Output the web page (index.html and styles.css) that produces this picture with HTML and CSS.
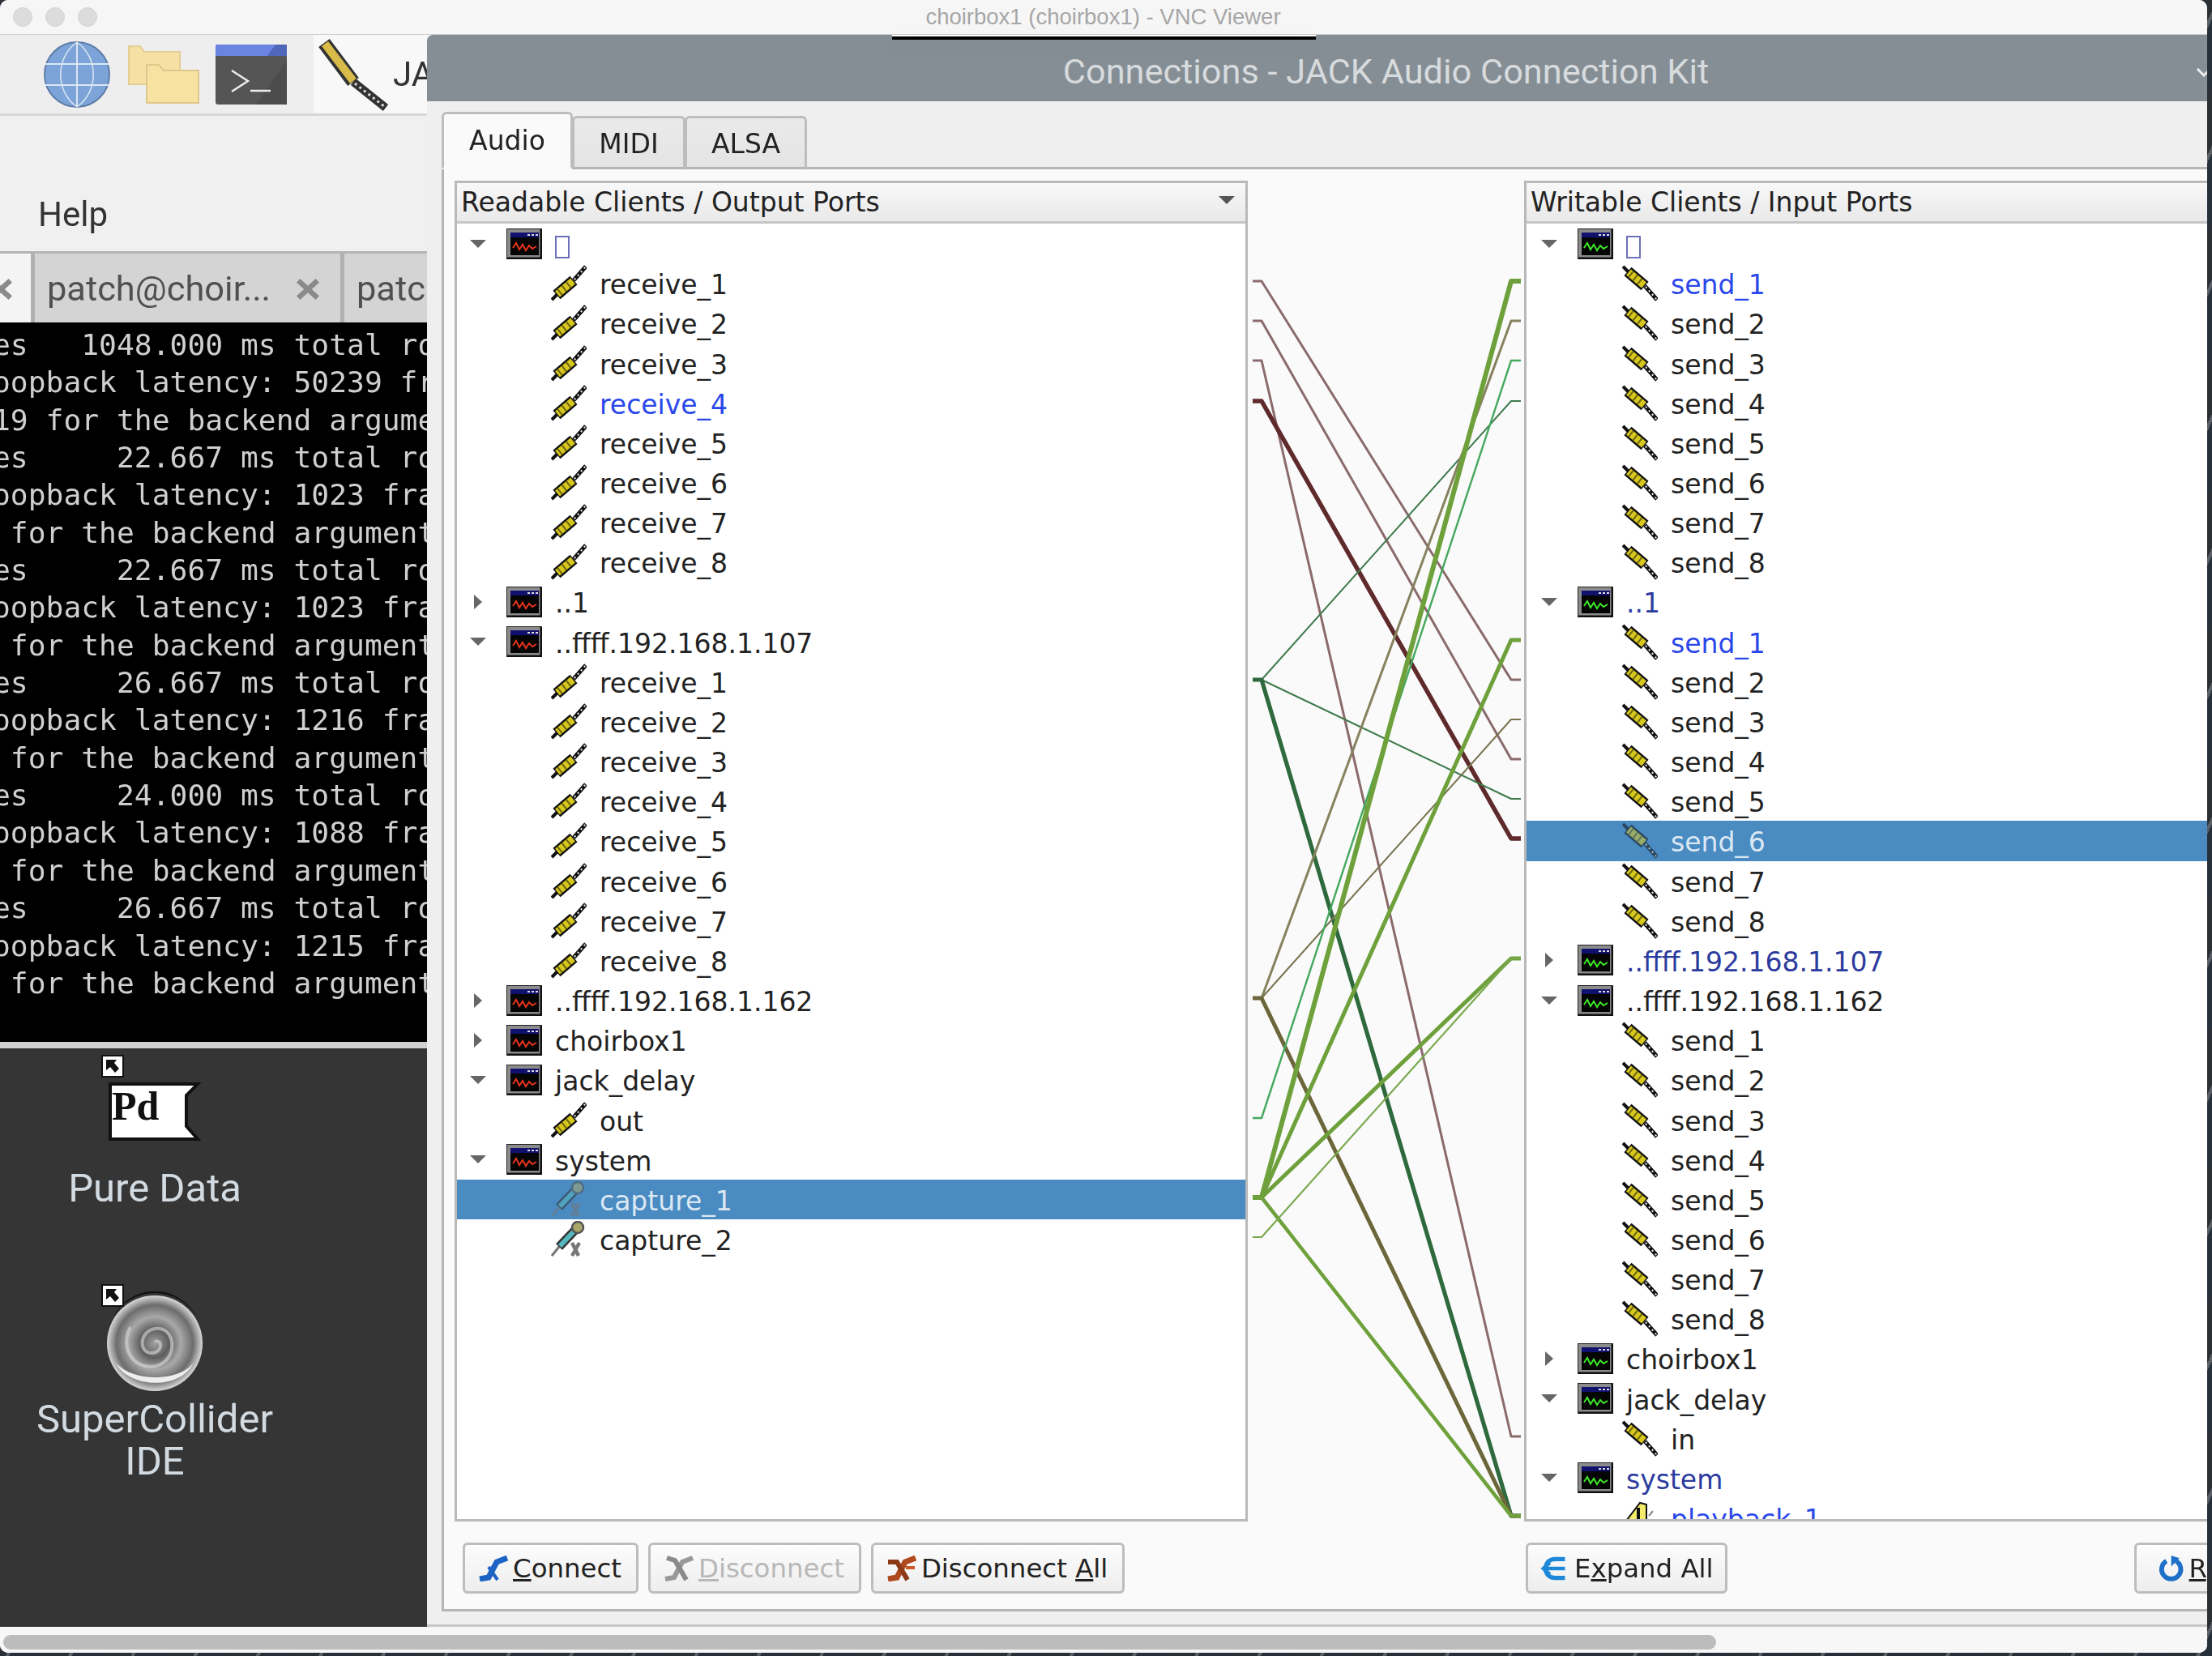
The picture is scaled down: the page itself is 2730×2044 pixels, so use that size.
FILE: index.html
```html
<!DOCTYPE html>
<html lang="en">
<head>
  <meta charset="UTF-8">
  <title>choirbox1 (choirbox1) - VNC Viewer</title>
  <link rel="stylesheet" href="styles.css">
</head>
<body>

  <!-- shared icons -->
  <svg class="defs" width="0" height="0">
    <defs>
      <g id="plug">
        <path d="M1 43L9 35" stroke="#111" stroke-width="4"/>
        <path d="M7 37L28 19" stroke="#111" stroke-width="14"/>
        <path d="M8 36L27 20" stroke="#d8c81e" stroke-width="9"/>
        <path d="M10 34L25 22" stroke="#6a6410" stroke-width="9" stroke-dasharray="2 5"/>
        <path d="M28 19L43 2" stroke="#111" stroke-width="5"/>
        <path d="M29 18L43 2" stroke="#eee" stroke-width="2" stroke-dasharray="2 4"/>
      </g>
      <g id="client-red">
        <rect x="0.5" y="0.5" width="43" height="37" fill="#8b8b8b" stroke="#222"/>
        <path d="M43 1V37H1" fill="none" stroke="#111" stroke-width="3"/>
        <rect x="5" y="5" width="35" height="28" fill="#050505"/>
        <rect x="5" y="5" width="35" height="6" fill="#10106e"/>
        <path d="M26 8h3M31 8h3M36 8h3" stroke="#ddd" stroke-width="2"/>
        <path d="M8 24L12 18L16 26L20 20L24 27L28 21L32 25L37 22" fill="none" stroke="#e8341c" stroke-width="2"/>
      </g>
      <g id="client-green">
        <rect x="0.5" y="0.5" width="43" height="37" fill="#8b8b8b" stroke="#222"/>
        <path d="M43 1V37H1" fill="none" stroke="#111" stroke-width="3"/>
        <rect x="5" y="5" width="35" height="28" fill="#050505"/>
        <rect x="5" y="5" width="35" height="6" fill="#10106e"/>
        <path d="M26 8h3M31 8h3M36 8h3" stroke="#ddd" stroke-width="2"/>
        <path d="M8 24L12 18L16 26L20 20L24 27L28 21L32 25L37 22" fill="none" stroke="#3ee82a" stroke-width="2"/>
      </g>
      <g id="mic">
        <path d="M1 43L14 27" stroke="#777" stroke-width="3"/>
        <path d="M10 32L30 11" stroke="#333" stroke-width="11"/>
        <path d="M11 31L29 12" stroke="#55b8bc" stroke-width="6"/>
        <circle cx="33" cy="8" r="7" fill="#a8a66a" stroke="#555" stroke-width="2.5"/>
        <path d="M26 27L34 43M35 27L26 43" stroke="#777" stroke-width="4.5"/>
      </g>
      <g id="shortcut">
        <rect width="26" height="26" fill="#fff" stroke="#111" stroke-width="2"/>
        <path d="M5 5H18L15 9L21 16L16 21L10 14L5 18Z" fill="#111"/>
      </g>
    </defs>
  </svg>

  <div class="mac-window">
    <div class="mac-titlebar">
      <div class="lights"><i></i><i></i><i></i></div>
      <div class="mac-title">choirbox1 (choirbox1) - VNC Viewer</div>
    </div>
    <div class="vnc-handle"></div>

    <div class="vnc">
      <!-- LEFT: panel, terminal, desktop -->
      <div class="left-col">
        <div class="panel">
          <svg class="p-globe" viewBox="0 0 82 82">
            <ellipse cx="41" cy="41" rx="40" ry="40" fill="#7da4d8" stroke="#5d7ca8" stroke-width="2"/>
            <path d="M41 1V81M2 28H80M2 54H80" stroke="#dbe6f4" stroke-width="2" fill="none"/>
            <path d="M41 1C14 20 14 62 41 81M41 1C68 20 68 62 41 81" stroke="#dbe6f4" stroke-width="1.5" fill="none"/>
          </svg>
          <svg class="p-folder" viewBox="0 0 88 72">
            <path d="M1 1H15L20 8H64V48H1Z" fill="#f6e0a4" stroke="#e3cf96" stroke-width="2"/>
            <path d="M23 24H38L44 31H87V71H23Z" fill="#f8e2a2" stroke="#dfc88e" stroke-width="2"/>
          </svg>
          <svg class="p-term" viewBox="0 0 88 74">
            <rect width="88" height="74" rx="3" fill="#555"/>
            <path d="M50 74L88 20V74Z" fill="#4c4c4c"/>
            <rect width="88" height="14" rx="2" fill="#6a84e2"/>
            <path d="M64 14L74 0H88V14Z" fill="#5066b8"/>
            <path d="M20 32L40 45L20 58" fill="none" stroke="#eee" stroke-width="2.5"/>
            <path d="M43 57H68" stroke="#eee" stroke-width="2.5"/>
          </svg>
          <div class="panel-task">
            <svg class="p-jack" viewBox="0 0 90 90">
              <path d="M8 6L44 54" stroke="#333" stroke-width="17"/>
              <path d="M9 7L44 53" stroke="#d9bb4a" stroke-width="10"/>
              <path d="M44 54L84 86" stroke="#333" stroke-width="10"/>
              <path d="M46 56L83 85" stroke="#ddd" stroke-width="3" stroke-dasharray="3 4"/>
            </svg>
            <span class="task-label">JACK</span>
          </div>
        </div>
        <div class="menu"><span>Help</span></div>
        <div class="tabbar">
          <div class="term-tab current"><svg class="x" viewBox="0 0 28 26"><path d="M3 3L25 23M25 3L3 23"/></svg></div>
          <div class="term-tab"><span>patch@choir...</span><svg class="x" viewBox="0 0 28 26"><path d="M3 3L25 23M25 3L3 23"/></svg></div>
          <div class="term-tab"><span>patch@choir...</span></div>
        </div>
        <pre class="terminal">es   1048.000 ms total ro
oopback latency: 50239 fr
19 for the backend argume
es     22.667 ms total ro
oopback latency: 1023 fra
 for the backend argument
es     22.667 ms total ro
oopback latency: 1023 fra
 for the backend argument
es     26.667 ms total ro
oopback latency: 1216 fra
 for the backend argument
es     24.000 ms total ro
oopback latency: 1088 fra
 for the backend argument
es     26.667 ms total ro
oopback latency: 1215 fra
 for the backend argument</pre>
        <div class="desktop">
          <div class="launcher pd">
            <div class="launcher-icon">
              <svg class="lnk" viewBox="-1 -1 28 28"><use href="#shortcut"/></svg>
              <svg class="pd-flag" viewBox="0 0 114 72">
                <path d="M2 2H110L96 16V54L110 70H2Z" fill="#fff" stroke="#111" stroke-width="4"/>
                <text x="4" y="46" class="pd-text">Pd</text>
              </svg>
            </div>
            <div class="launcher-label">Pure Data</div>
          </div>
          <div class="launcher sc">
            <div class="launcher-icon">
              <svg class="swirl" viewBox="0 0 124 124">
                <defs>
                  <radialGradient id="sw" cx="50%" cy="50%" r="50%">
                    <stop offset="0" stop-color="#a0a0a0"/>
                    <stop offset=".3" stop-color="#5e5e5e"/>
                    <stop offset=".55" stop-color="#a8a8a8"/>
                    <stop offset=".8" stop-color="#6c6c6c"/>
                    <stop offset="1" stop-color="#d8d8d8"/>
                  </radialGradient>
                </defs>
                <circle cx="62" cy="64" r="59" fill="url(#sw)"/>
                <path d="M10 32A60 60 0 0 1 114 32A58 58 0 0 0 10 32Z" fill="#111"/>
                <path d="M62 62C72 58 72 76 58 76C42 76 42 50 62 46C88 42 92 84 64 92C36 98 18 70 32 44" fill="none" stroke="#d8d8d8" stroke-width="4" opacity=".6"/>
                <path d="M14 88C28 118 92 124 110 88C92 112 34 112 14 88Z" fill="#eee"/>
              </svg>
              <svg class="lnk" viewBox="-1 -1 28 28"><use href="#shortcut"/></svg>
            </div>
            <div class="launcher-label">SuperCollider<br>IDE</div>
          </div>
        </div>
      </div>

      <!-- RIGHT: connections dialog -->
      <div class="dialog">
        <div class="dialog-title">
          <span>Connections - JACK Audio Connection Kit</span>
          <svg class="chev" viewBox="0 0 20 12"><path d="M2 2L10 10L18 2"/></svg>
        </div>
        <div class="tabs">
          <div class="tab active">Audio</div>
          <div class="tab">MIDI</div>
          <div class="tab">ALSA</div>
        </div>
        <div class="pane">
          <div class="trees">
            <div class="tree left">
              <div class="tree-head">Readable Clients / Output Ports<i class="sort"></i></div>
              <div class="tree-body">
                <div class="row client"><i class="arrow open"></i><svg class="c-icon"><use href="#client-red"/></svg><span class="tofu"></span></div>
                <div class="row port"><svg class="p-icon"><use href="#plug"/></svg><span>receive_1</span></div>
                <div class="row port"><svg class="p-icon"><use href="#plug"/></svg><span>receive_2</span></div>
                <div class="row port"><svg class="p-icon"><use href="#plug"/></svg><span>receive_3</span></div>
                <div class="row port linked"><svg class="p-icon"><use href="#plug"/></svg><span>receive_4</span></div>
                <div class="row port"><svg class="p-icon"><use href="#plug"/></svg><span>receive_5</span></div>
                <div class="row port"><svg class="p-icon"><use href="#plug"/></svg><span>receive_6</span></div>
                <div class="row port"><svg class="p-icon"><use href="#plug"/></svg><span>receive_7</span></div>
                <div class="row port"><svg class="p-icon"><use href="#plug"/></svg><span>receive_8</span></div>
                <div class="row client"><i class="arrow"></i><svg class="c-icon"><use href="#client-red"/></svg><span>..1</span></div>
                <div class="row client"><i class="arrow open"></i><svg class="c-icon"><use href="#client-red"/></svg><span>..ffff.192.168.1.107</span></div>
                <div class="row port"><svg class="p-icon"><use href="#plug"/></svg><span>receive_1</span></div>
                <div class="row port"><svg class="p-icon"><use href="#plug"/></svg><span>receive_2</span></div>
                <div class="row port"><svg class="p-icon"><use href="#plug"/></svg><span>receive_3</span></div>
                <div class="row port"><svg class="p-icon"><use href="#plug"/></svg><span>receive_4</span></div>
                <div class="row port"><svg class="p-icon"><use href="#plug"/></svg><span>receive_5</span></div>
                <div class="row port"><svg class="p-icon"><use href="#plug"/></svg><span>receive_6</span></div>
                <div class="row port"><svg class="p-icon"><use href="#plug"/></svg><span>receive_7</span></div>
                <div class="row port"><svg class="p-icon"><use href="#plug"/></svg><span>receive_8</span></div>
                <div class="row client"><i class="arrow"></i><svg class="c-icon"><use href="#client-red"/></svg><span>..ffff.192.168.1.162</span></div>
                <div class="row client"><i class="arrow"></i><svg class="c-icon"><use href="#client-red"/></svg><span>choirbox1</span></div>
                <div class="row client"><i class="arrow open"></i><svg class="c-icon"><use href="#client-red"/></svg><span>jack_delay</span></div>
                <div class="row port"><svg class="p-icon"><use href="#plug"/></svg><span>out</span></div>
                <div class="row client"><i class="arrow open"></i><svg class="c-icon"><use href="#client-red"/></svg><span>system</span></div>
                <div class="row port selected"><svg class="p-icon"><use href="#mic"/></svg><span>capture_1</span></div>
                <div class="row port"><svg class="p-icon"><use href="#mic"/></svg><span>capture_2</span></div>
              </div>
            </div>

            <svg class="connect-view" viewBox="1540 223 341 1654">
              <polyline class="c-red" points="1546,347 1557,347 1865,839 1877,839"/>
              <polyline class="c-red" points="1546,396 1557,396 1865,937 1877,937"/>
              <polyline class="c-red" points="1546,445 1557,445 1865,1773 1877,1773"/>
              <polyline class="c-red-b" points="1546,495 1557,495 1865,1035 1877,1035"/>
              <polyline class="c-grn" points="1546,839 1557,839 1865,495 1877,495"/>
              <polyline class="c-grn" points="1546,839 1557,839 1865,986 1877,986"/>
              <polyline class="c-grn-b" points="1546,839 1557,839 1865,1871 1877,1871"/>
              <polyline class="c-brn" points="1546,1232 1557,1232 1865,396 1877,396"/>
              <polyline class="c-brn-t" points="1546,1232 1557,1232 1865,888 1877,888"/>
              <polyline class="c-brn-b" points="1546,1232 1557,1232 1865,1871 1877,1871"/>
              <polyline class="c-lime" points="1546,1380 1557,1380 1865,445 1877,445"/>
              <polyline class="c-ol w5" points="1546,1478 1557,1478 1865,347 1877,347"/>
              <polyline class="c-ol w4" points="1546,1478 1557,1478 1865,790 1877,790"/>
              <polyline class="c-ol w4" points="1546,1478 1557,1478 1865,1183 1877,1183"/>
              <polyline class="c-ol w3" points="1546,1478 1557,1478 1865,1871 1877,1871"/>
              <polyline class="c-ol-t" points="1546,1527 1557,1527 1865,1183 1877,1183"/>
            </svg>

            <div class="tree right">
              <div class="tree-head">Writable Clients / Input Ports</div>
              <div class="tree-body">
                <div class="row client"><i class="arrow open"></i><svg class="c-icon"><use href="#client-green"/></svg><span class="tofu"></span></div>
                <div class="row port linked"><svg class="p-icon flip"><use href="#plug"/></svg><span>send_1</span></div>
                <div class="row port"><svg class="p-icon flip"><use href="#plug"/></svg><span>send_2</span></div>
                <div class="row port"><svg class="p-icon flip"><use href="#plug"/></svg><span>send_3</span></div>
                <div class="row port"><svg class="p-icon flip"><use href="#plug"/></svg><span>send_4</span></div>
                <div class="row port"><svg class="p-icon flip"><use href="#plug"/></svg><span>send_5</span></div>
                <div class="row port"><svg class="p-icon flip"><use href="#plug"/></svg><span>send_6</span></div>
                <div class="row port"><svg class="p-icon flip"><use href="#plug"/></svg><span>send_7</span></div>
                <div class="row port"><svg class="p-icon flip"><use href="#plug"/></svg><span>send_8</span></div>
                <div class="row client has-link"><i class="arrow open"></i><svg class="c-icon"><use href="#client-green"/></svg><span>..1</span></div>
                <div class="row port linked"><svg class="p-icon flip"><use href="#plug"/></svg><span>send_1</span></div>
                <div class="row port"><svg class="p-icon flip"><use href="#plug"/></svg><span>send_2</span></div>
                <div class="row port"><svg class="p-icon flip"><use href="#plug"/></svg><span>send_3</span></div>
                <div class="row port"><svg class="p-icon flip"><use href="#plug"/></svg><span>send_4</span></div>
                <div class="row port"><svg class="p-icon flip"><use href="#plug"/></svg><span>send_5</span></div>
                <div class="row port selected"><svg class="p-icon flip"><use href="#plug"/></svg><span>send_6</span></div>
                <div class="row port"><svg class="p-icon flip"><use href="#plug"/></svg><span>send_7</span></div>
                <div class="row port"><svg class="p-icon flip"><use href="#plug"/></svg><span>send_8</span></div>
                <div class="row client has-link"><i class="arrow"></i><svg class="c-icon"><use href="#client-green"/></svg><span>..ffff.192.168.1.107</span></div>
                <div class="row client"><i class="arrow open"></i><svg class="c-icon"><use href="#client-green"/></svg><span>..ffff.192.168.1.162</span></div>
                <div class="row port"><svg class="p-icon flip"><use href="#plug"/></svg><span>send_1</span></div>
                <div class="row port"><svg class="p-icon flip"><use href="#plug"/></svg><span>send_2</span></div>
                <div class="row port"><svg class="p-icon flip"><use href="#plug"/></svg><span>send_3</span></div>
                <div class="row port"><svg class="p-icon flip"><use href="#plug"/></svg><span>send_4</span></div>
                <div class="row port"><svg class="p-icon flip"><use href="#plug"/></svg><span>send_5</span></div>
                <div class="row port"><svg class="p-icon flip"><use href="#plug"/></svg><span>send_6</span></div>
                <div class="row port"><svg class="p-icon flip"><use href="#plug"/></svg><span>send_7</span></div>
                <div class="row port"><svg class="p-icon flip"><use href="#plug"/></svg><span>send_8</span></div>
                <div class="row client"><i class="arrow"></i><svg class="c-icon"><use href="#client-green"/></svg><span>choirbox1</span></div>
                <div class="row client"><i class="arrow open"></i><svg class="c-icon"><use href="#client-green"/></svg><span>jack_delay</span></div>
                <div class="row port"><svg class="p-icon flip"><use href="#plug"/></svg><span>in</span></div>
                <div class="row client has-link"><i class="arrow open"></i><svg class="c-icon"><use href="#client-green"/></svg><span>system</span></div>
                <div class="row port linked"><svg class="p-icon" viewBox="0 0 44 45"><path d="M2 44V30L22 4L30 6V44Z" fill="#f4ec6a" stroke="#111" stroke-width="2"/><path d="M20 10V44" stroke="#111" stroke-width="4"/><path d="M33 20L38 14M33 32H40" stroke="#888" stroke-width="2"/></svg><span>playback_1</span></div>
              </div>
            </div>
          </div>

          <div class="btn-row">
            <div class="btn-group-left">
              <button class="btn"><svg class="b-icon" viewBox="0 0 38 32"><path d="M2 29L13 27L23 8L36 3" fill="none" stroke="#1d63c4" stroke-width="7"/><path d="M13 14L24 30" stroke="#1d63c4" stroke-width="4"/></svg><span><u>C</u>onnect</span></button>
              <button class="btn off"><svg class="b-icon" viewBox="0 0 38 32"><path d="M2 29L13 27L23 8L36 3" fill="none" stroke="#999" stroke-width="6"/><path d="M4 3L14 6L28 30" fill="none" stroke="#8a8a8a" stroke-width="6"/></svg><span><u>D</u>isconnect</span></button>
              <button class="btn"><svg class="b-icon" viewBox="0 0 38 32"><path d="M2 29L13 27L23 8L36 3" fill="none" stroke="#b0491d" stroke-width="7"/><path d="M2 8L13 8L26 30" fill="none" stroke="#8e3a18" stroke-width="6"/><path d="M24 15H35" stroke="#c85a28" stroke-width="4"/></svg><span>Disconnect <u>A</u>ll</span></button>
            </div>
            <button class="btn expand"><svg class="b-icon" viewBox="0 0 38 36"><path d="M33 5H20C8 5 6 14 6 18C6 22 8 31 20 31H33" fill="none" stroke="#1e88d8" stroke-width="6"/><path d="M3 18H33" stroke="#1e88d8" stroke-width="5"/><path d="M12 10L3 18L12 26" fill="none" stroke="#1e88d8" stroke-width="5"/></svg><span>E<u>x</u>pand All</span></button>
            <button class="btn refresh"><svg class="b-icon" viewBox="0 0 38 38"><path d="M14 8A14 14 0 1 0 28 8" fill="none" stroke="#1e6fc8" stroke-width="7"/><path d="M21 0V16L33 4Z" fill="#1e6fc8"/></svg><span><u>R</u>efresh</span></button>
          </div>
        </div>
      </div>
    </div>

    <div class="hscroll"><div class="thumb"></div></div>
  </div>

</body>
</html>
```

FILE: styles.css
```css
html, body {
  margin: 0;
  padding: 0;
}
body {
  width: 2730px;
  height: 2044px;
  overflow: hidden;
  background: #2e3439 repeating-linear-gradient(115deg, #2a3036 0 30px, #5a6066 30px 34px, #26303a 34px 70px);
}
.defs {
  display: block;
  height: 0;
}
.mac-window {
  width: 2724px;
  height: 2040px;
  display: flex;
  flex-direction: column;
  position: relative;
  border-radius: 10px;
  overflow: hidden;
  background: #f6f6f6;
  filter: blur(0.7px);
}

/* mac titlebar */
.mac-titlebar {
  height: 43px;
  flex: none;
  display: flex;
  align-items: center;
  background: #f6f6f6;
  border-bottom: 1px solid #cfcfcf;
  box-sizing: border-box;
}
.lights {
  display: flex;
  gap: 16px;
  margin-left: 16px;
}
.lights i {
  width: 24px;
  height: 24px;
  border-radius: 50%;
  background: #dcdcdc;
  border: 1px solid #d2d2d2;
  box-sizing: border-box;
}
.mac-title {
  width: 439px;
  margin-left: 1022px;
  white-space: nowrap;
  text-align: center;
  font: 27.5px "Liberation Sans", sans-serif;
  color: #a6a6a6;
}
.vnc-handle {
  position: absolute;
  z-index: 2;
  left: 1101px;
  top: 43px;
  width: 523px;
  height: 6px;
  box-sizing: border-box;
  background: #000;
  border-top: 2px solid #fff;
  box-shadow: 0 8px 30px rgba(0, 0, 0, .07);
}

.vnc {
  flex: 1;
  min-height: 0;
  display: flex;
}

/* left column */
.left-col {
  width: 527px;
  flex: none;
  display: flex;
  flex-direction: column;
  font-family: Roboto, sans-serif;
  overflow: hidden;
}
.panel {
  height: 100px;
  flex: none;
  box-sizing: border-box;
  display: flex;
  align-items: center;
  background: #eeeeee;
  border-bottom: 3px solid #d6d6d6;
  padding-left: 54px;
}
.panel svg {
  flex: none;
}
.p-globe { width: 82px; height: 82px; }
.p-folder { width: 88px; height: 72px; margin-left: 22px; }
.p-term { width: 88px; height: 74px; margin-left: 20px; }
.panel-task {
  margin-left: 33px;
  flex: none;
  width: 160px;
  height: 97px;
  padding-left: 5px;
  display: flex;
  align-items: center;
  background: #f8f8f8;
}
.p-jack { width: 90px; height: 90px; }
.task-label {
  font-size: 42px;
  color: #333;
  margin-left: 3px;
  white-space: nowrap;
}
.menu {
  height: 167px;
  flex: none;
  box-sizing: border-box;
  background: #f0f0f0;
  display: flex;
  align-items: flex-end;
  padding: 0 0 21px 47px;
  font-size: 42px;
  color: #333;
}
.tabbar {
  height: 88px;
  flex: none;
  box-sizing: border-box;
  display: flex;
  background: #d4d4d4;
  border-top: 3px solid #b4b4b4;
  overflow: hidden;
}
.term-tab {
  flex: none;
  width: 382px;
  box-sizing: border-box;
  border-left: 5px solid #b0b0b0;
  padding: 2px 0 0 15px;
  display: flex;
  align-items: center;
  font-size: 43.4px;
  color: #505050;
  white-space: nowrap;
}
.term-tab.current {
  width: 38px;
  background: #f4f4f4;
  border-left: 0;
  padding-left: 0;
  justify-content: flex-end;
}
.term-tab span {
  width: 307px;
}
.term-tab .x {
  width: 30px;
  height: 28px;
  flex: none;
  fill: none;
  stroke: #8a8a8a;
  stroke-width: 6;
}
.term-tab.current .x {
  margin: 0 22px 0 -14px;
}
.terminal {
  margin: 0 0 0 -9px;
  height: 888px;
  flex: none;
  box-sizing: border-box;
  background: #000;
  color: #cfcfcf;
  font: 36.3px/46.35px "DejaVu Sans Mono", monospace;
  padding-top: 5px;
  overflow: hidden;
}
.desktop {
  flex: 1;
  background: #353535;
  border-top: 8px solid #d2d2d2;
  color: #d3dbe2;
  font-size: 49px;
  text-align: center;
}
.launcher {
  width: 382px;
}
.launcher-icon {
  position: relative;
  height: 114px;
  padding-top: 42px;
  display: flex;
  justify-content: center;
}
.launcher-label {
  line-height: 52px;
}
.pd .launcher-label {
  margin-top: -9px;
}
.launcher.sc {
  margin-top: 84px;
}
.sc .launcher-label {
  margin-top: -7px;
}
.lnk {
  position: absolute;
  width: 28px;
  height: 28px;
  left: 125px;
  top: 8px;
}
.pd-flag {
  width: 114px;
  height: 72px;
}
.pd-text {
  font: bold 50px "Liberation Serif", serif;
  fill: #111;
}
.swirl {
  width: 124px;
  height: 124px;
  margin-top: -25px;
}

/* dialog */
.dialog {
  flex: 1;
  min-width: 0;
  display: flex;
  flex-direction: column;
  background: #efefef;
  border-bottom: 3px solid #c6c6c6;
  box-sizing: border-box;
  font-family: "DejaVu Sans", sans-serif;
  font-size: 33px;
  color: #222;
  overflow: hidden;
}
.dialog-title {
  height: 82px;
  flex: none;
  box-sizing: border-box;
  position: relative;
  display: flex;
  align-items: center;
  justify-content: center;
  padding: 8px 0 0 170px;
  background: #858e94;
  border-radius: 8px 0 0 0;
  font: 43.3px Roboto, sans-serif;
  color: #d7dbde;
}
.chev {
  position: absolute;
  right: -6px;
  top: 40px;
  width: 20px;
  height: 12px;
  fill: none;
  stroke: #eee;
  stroke-width: 3;
}
.tabs {
  height: 84px;
  flex: none;
  box-sizing: border-box;
  display: flex;
  align-items: flex-end;
  padding-left: 18px;
  margin-bottom: -3px;
  position: relative;
  z-index: 1;
}
.tab {
  box-sizing: border-box;
  height: 66px;
  padding-top: 3px;
  display: flex;
  align-items: center;
  justify-content: center;
  background: linear-gradient(#eaeaea, #e4e4e4);
  border: 3px solid #bdbdbd;
  border-bottom: 3px solid #b5b5b5;
  border-radius: 6px 6px 0 0;
  margin-right: -1px;
  width: 140px;
}
.tab:last-child {
  width: 151px;
}
.tab.active {
  height: 71px;
  width: 162px;
  padding: 0;
  background: #fafafa;
  border-bottom-color: #fafafa;
}
.pane {
  flex: none;
  height: 1783px;
  margin-left: 18px;
  box-sizing: border-box;
  width: 2300px;
  background: #fafafa;
  border: 3px solid #b5b5b5;
  padding: 14px 0 0 13px;
}
.trees {
  display: flex;
  height: 1655px;
}
.tree {
  display: flex;
  flex-direction: column;
  flex: none;
  box-sizing: border-box;
  background: #fff;
  border: 3px solid #b9b9b9;
  overflow: hidden;
}
.tree.left { width: 979px; }
.tree.right { width: 900px; }
.tree-head {
  height: 50px;
  flex: none;
  position: relative;
  box-sizing: border-box;
  padding-left: 5px;
  line-height: 48px;
  background: linear-gradient(#f8f8f8, #e9e9e9);
  border-bottom: 3px solid #c6c6c6;
  white-space: nowrap;
}
.sort {
  position: absolute;
  right: 13px;
  top: 16px;
  border-left: 10px solid transparent;
  border-right: 10px solid transparent;
  border-top: 10px solid #555;
}
.tree-body {
  flex: 1;
  min-height: 0;
  overflow: hidden;
}
.connect-view {
  width: 341px;
  height: 1654px;
  flex: none;
}
.connect-view polyline {
  fill: none;
  stroke-linejoin: round;
}
.c-red { stroke: #8b6a6c; stroke-width: 3; }
.c-red-b { stroke: #5f2a2c; stroke-width: 5.5; }
.c-grn { stroke: #3f7a4c; stroke-width: 2; }
.c-grn-b { stroke: #2f6a3e; stroke-width: 5.2; }
.c-brn { stroke: #86815e; stroke-width: 3; }
.c-brn-t { stroke: #78734e; stroke-width: 2; }
.c-brn-b { stroke: #6c663a; stroke-width: 5; }
.c-lime { stroke: #44a85e; stroke-width: 2.4; }
.c-ol { stroke: #6ea13c; }
.c-ol.w5 { stroke-width: 6; }
.c-ol.w4 { stroke-width: 5; }
.c-ol.w3 { stroke-width: 4.5; }
.c-ol-t { stroke: #7aa950; stroke-width: 2.2; }

.row {
  height: 49.17px;
  display: flex;
  align-items: center;
  white-space: nowrap;
  color: #222;
}
.row span {
  margin-top: 4px;
}
.tree.right .row {
  padding-left: 2px;
}
.arrow {
  width: 20px;
  height: 20px;
  flex: none;
  margin-left: 16px;
  display: flex;
  align-items: center;
  justify-content: center;
}
.arrow::before {
  content: "";
  border-top: 9px solid transparent;
  border-bottom: 9px solid transparent;
  border-left: 10px solid #666;
}
.arrow.open::before {
  border-left: 10px solid transparent;
  border-right: 10px solid transparent;
  border-top: 10px solid #666;
  border-bottom: 0;
}
.c-icon {
  width: 44px;
  height: 38px;
  flex: none;
  margin-left: 25px;
}
.client span {
  margin-left: 16px;
}
.p-icon {
  width: 44px;
  height: 45px;
  flex: none;
  margin-left: 116px;
}
.flip {
  transform: scaleY(-1);
}
.port span {
  margin-left: 16px;
}
.row .tofu {
  display: inline-block;
  width: 18px;
  height: 28px;
  box-sizing: border-box;
  border: 2px solid #6c70b8;
  margin-top: 8px;
}
.linked {
  color: #2a47ea;
}
.has-link {
  color: #2c3b9e;
}
.selected {
  background: #4a8bc2;
  color: #dbe8f3;
}
.selected .p-icon {
  opacity: .55;
}

/* buttons */
.btn-row {
  display: flex;
  margin-top: 26px;
}
.btn-group-left {
  width: 1322px;
  flex: none;
  display: flex;
  gap: 12px;
  padding-left: 10px;
  box-sizing: border-box;
}
.btn {
  height: 63px;
  box-sizing: border-box;
  display: flex;
  align-items: center;
  padding: 0 18px 0 16px;
  font: 32.4px "DejaVu Sans", sans-serif;
  color: #222;
  background: linear-gradient(#fcfcfc, #eeeeee);
  border: 3px solid #bdbdbd;
  border-radius: 6px;
  white-space: nowrap;
}
.btn.off {
  color: #b8b8b8;
}
.b-icon {
  width: 38px;
  height: 32px;
  flex: none;
  margin-right: 5px;
}
.btn.expand {
  padding: 0 14px;
}
.btn.refresh {
  margin-left: 502px;
  width: 220px;
  padding-left: 22px;
}

.hscroll {
  height: 32px;
  flex: none;
  background: #f7f7f7;
  padding: 10px 0 4px 4px;
  box-sizing: border-box;
}
.thumb {
  width: 2114px;
  height: 18px;
  background: #bcbcbc;
  border-radius: 9px;
}
```
